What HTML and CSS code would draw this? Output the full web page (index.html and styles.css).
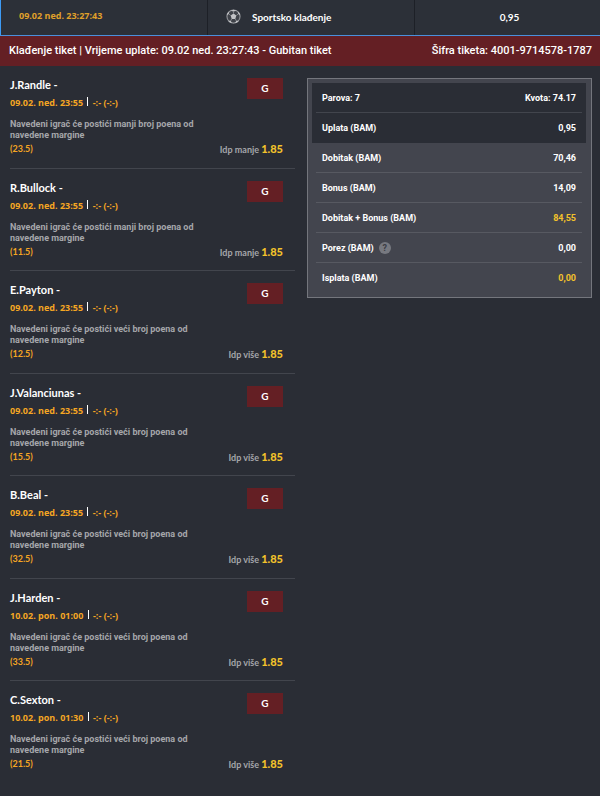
FILE: index.html
```html
<!DOCTYPE html>
<html lang="bs">
<head>
<meta charset="utf-8">
<meta name="viewport" content="width=device-width, initial-scale=1">
<title>Tiket</title>
<link rel="stylesheet" href="styles.css">
</head>
<body>
<header class="summary">
  <time class="summary-date">09.02 ned. 23:27:43</time>
  <div class="summary-type">
    <svg class="ball" viewBox="0 0 16 16" aria-hidden="true">
      <circle cx="8" cy="8" r="7" fill="#3f4249" stroke="#909297" stroke-width="1.2"/>
      <path d="M8 4.8 11 7 9.9 10.6H6.1L5 7ZM4.6 1.8 8 2.6 11.4 1.8 8 .8ZM.9 6.6 3 5.2 3.6 2.6 1.6 4.2ZM15.1 6.6 13 5.2 12.4 2.6 14.4 4.2ZM2.2 12.4 5 12.6 6.4 15.2 4 14.4ZM13.8 12.4 11 12.6 9.6 15.2 12 14.4Z" fill="#c2c3c6"/>
      <path d="M8 4.8V2.6M11 7 13 5.2M9.9 10.6 11 12.6M6.1 10.6 5 12.6M5 7 3 5.2" fill="none" stroke="#909297" stroke-width=".9"/>
    </svg>
    <span>Sportsko klađenje</span>
  </div>
  <div class="summary-stake">0,95</div>
</header>
<div class="ticket-bar">
  <h1>Klađenje tiket | Vrijeme uplate: 09.02 ned. 23:27:43 - Gubitan tiket</h1>
  <span>Šifra tiketa: 4001-9714578-1787</span>
</div>
<main class="ticket">
  <ul class="bets">
    <li class="bet">
      <div class="bet-head"><div><h2>J.Randle -</h2><p class="when">09.02. ned. 23:55 <i></i> -:- (-:-)</p></div><span class="badge">G</span></div>
      <p class="desc">Navedeni igrač će postići manji broj poena od navedene margine</p>
      <div class="pick"><span class="margin">(23.5)</span><span>Idp manje <b>1.85</b></span></div>
    </li>
    <li class="bet">
      <div class="bet-head"><div><h2>R.Bullock -</h2><p class="when">09.02. ned. 23:55 <i></i> -:- (-:-)</p></div><span class="badge">G</span></div>
      <p class="desc">Navedeni igrač će postići manji broj poena od navedene margine</p>
      <div class="pick"><span class="margin">(11.5)</span><span>Idp manje <b>1.85</b></span></div>
    </li>
    <li class="bet">
      <div class="bet-head"><div><h2>E.Payton -</h2><p class="when">09.02. ned. 23:55 <i></i> -:- (-:-)</p></div><span class="badge">G</span></div>
      <p class="desc">Navedeni igrač će postići veći broj poena od navedene margine</p>
      <div class="pick"><span class="margin">(12.5)</span><span>Idp više <b>1.85</b></span></div>
    </li>
    <li class="bet">
      <div class="bet-head"><div><h2>J.Valanciunas -</h2><p class="when">09.02. ned. 23:55 <i></i> -:- (-:-)</p></div><span class="badge">G</span></div>
      <p class="desc">Navedeni igrač će postići veći broj poena od navedene margine</p>
      <div class="pick"><span class="margin">(15.5)</span><span>Idp više <b>1.85</b></span></div>
    </li>
    <li class="bet">
      <div class="bet-head"><div><h2>B.Beal -</h2><p class="when">09.02. ned. 23:55 <i></i> -:- (-:-)</p></div><span class="badge">G</span></div>
      <p class="desc">Navedeni igrač će postići veći broj poena od navedene margine</p>
      <div class="pick"><span class="margin">(32.5)</span><span>Idp više <b>1.85</b></span></div>
    </li>
    <li class="bet">
      <div class="bet-head"><div><h2>J.Harden -</h2><p class="when">10.02. pon. 01:00 <i></i> -:- (-:-)</p></div><span class="badge">G</span></div>
      <p class="desc">Navedeni igrač će postići veći broj poena od navedene margine</p>
      <div class="pick"><span class="margin">(33.5)</span><span>Idp više <b>1.85</b></span></div>
    </li>
    <li class="bet">
      <div class="bet-head"><div><h2>C.Sexton -</h2><p class="when">10.02. pon. 01:30 <i></i> -:- (-:-)</p></div><span class="badge">G</span></div>
      <p class="desc">Navedeni igrač će postići veći broj poena od navedene margine</p>
      <div class="pick"><span class="margin">(21.5)</span><span>Idp više <b>1.85</b></span></div>
    </li>
  </ul>
  <dl class="totals">
    <div class="row dark"><dt>Parova: 7</dt><dd>Kvota: 74.17</dd></div>
    <div class="row dark last"><dt>Uplata (BAM)</dt><dd>0,95</dd></div>
    <div class="row"><dt>Dobitak (BAM)</dt><dd>70,46</dd></div>
    <div class="row"><dt>Bonus (BAM)</dt><dd>14,09</dd></div>
    <div class="row"><dt>Dobitak + Bonus (BAM)</dt><dd class="gold">84,55</dd></div>
    <div class="row"><dt>Porez (BAM) <button class="help" type="button">?</button></dt><dd>0,00</dd></div>
    <div class="row last"><dt>Isplata (BAM)</dt><dd class="gold">0,00</dd></div>
  </dl>
</main>
</body>
</html>
```
FILE: styles.css
```css
* { box-sizing: border-box; margin: 0; padding: 0; }

body {
  display: flex;
  flex-direction: column;
  min-height: 100vh;
  background: #2a2d35;
  color: #fff;
  font: 700 10px/14px Lato, "Liberation Sans", sans-serif;
  font-variant-ligatures: none;
}

.summary {
  display: grid;
  grid-template-columns: 206fr 207fr 186fr;
  height: 36px;
  background: #2c3038;
  border-left: 1px solid #3d9bf5;
  border-bottom: 1px solid #4a90dc;
}

.summary > * {
  display: flex;
  align-items: center;
  padding: 0 18px;
}

.summary > * + * { border-left: 1px solid #1d2027; }

.summary-date { color: #e0a02a; padding-bottom: 3px; font-size: 9px; font-family: "Open Sans", sans-serif; }
.summary .summary-type { gap: 11px; padding-bottom: 2px; }
.summary .summary-stake { justify-content: center; padding: 0 14px 2px 18px; }
.ball { width: 15px; height: 15px; }

.ticket-bar {
  display: flex;
  justify-content: space-between;
  align-items: center;
  min-height: 30px;
  padding: 0 8px 0 9px;
  background: #641f24;
  font: 500 11px/14px Roboto, sans-serif;
}

.ticket-bar h1 { font: inherit; }

.ticket {
  flex: 1;
  display: grid;
  grid-template-columns: 285fr 285fr;
  gap: 12px;
  align-items: start;
  padding: 0 8px 12px 10px;
}

.bets {
  display: flex;
  flex-direction: column;
  height: 100%;
  list-style: none;
}

.bet {
  flex: 1;
  padding: 12px 12px 8px 0;
  border-bottom: 1px solid #42454d;
}

.bet:last-child { border-color: transparent; }

.bet-head {
  display: flex;
  justify-content: space-between;
  align-items: flex-start;
}

.bet h2 { font-size: 11px; line-height: 13px; }
.when { color: #f5a623; font-size: 9px; line-height: 23px; font-family: "Open Sans", sans-serif; }

.when i {
  display: inline-block;
  width: 1px;
  height: 9px;
  margin: 0 2px;
  background: #fff;
}

.badge {
  width: 36px;
  background: #641f24;
  line-height: 21px;
  text-align: center;
}

.desc {
  max-width: 212px;
  margin-top: 5px;
  color: #a5a6aa;
  font: 700 9px/11px Roboto, sans-serif;
}

.pick {
  display: flex;
  justify-content: space-between;
  margin-top: 1px;
  color: #a5a6aa;
  font-size: 9px;
}

.margin { color: #f5a623; }
.pick b { color: #f3c22b; font-size: 11px; }

.totals {
  margin-top: 12px;
  padding: 4px 5px 4px 4px;
  background: #43454e;
  border: 1px solid #74767d;
  font: 700 9px/14px Roboto, sans-serif;
}

.row {
  display: grid;
  grid-template-columns: 1fr auto;
  align-items: center;
  padding: 0 4px;
}

.row dt, .row dd {
  display: flex;
  align-items: center;
  height: 30px;
  padding: 0 6px;
  border-bottom: 1px solid #575961;
}

.dark { background: #2a2d35; }
.dark dt, .dark dd { border-color: #42454d; }
.last dt, .last dd { border-color: transparent; }
.gold { color: #f3c22b; }

.help {
  width: 12px;
  height: 12px;
  margin-left: 5px;
  border: 0;
  border-radius: 50%;
  background: #777980;
  color: #3b3d45;
  font: 700 9px/12px Roboto, sans-serif;
}
```
